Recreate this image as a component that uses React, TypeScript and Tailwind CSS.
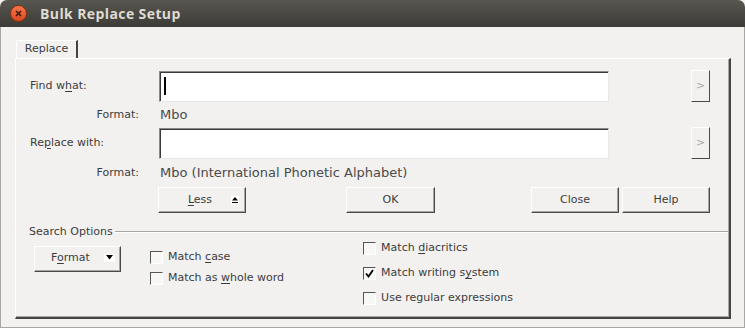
import React from "react";

const F = { fontFamily: '"DejaVu Sans", "Liberation Sans", sans-serif' };

function U({ children }: { children: React.ReactNode }) {
  return <span className="underline underline-offset-2 decoration-1">{children}</span>;
}

function Btn({ children, className = "" }: { children: React.ReactNode; className?: string }) {
  return (
    <div
      className={
        "h-[26px] flex items-center justify-center bg-[#f2f1f0] border-t border-l border-t-white border-l-white border-b border-r border-b-[#4a4a4a] border-r-[#4a4a4a] shadow-[inset_-1px_-1px_0_#a6a5a2] text-[11px] text-[#3c3c3c] " +
        className
      }
    >
      {children}
    </div>
  );
}

function Check({ checked = false, label }: { checked?: boolean; label: React.ReactNode }) {
  return (
    <div className="flex items-center gap-[5px] h-[16px] text-[11px] text-[#3c3c3c]">
      <div className="w-[13px] h-[13px] border-t border-l border-t-[#555] border-l-[#555] border-b border-r border-b-white border-r-white bg-[#f7f7f6] flex items-center justify-center">
        {checked && (
          <svg width="9" height="9" viewBox="0 0 9 9">
            <path d="M1 4.5 L3.5 7.5 L8 1" stroke="#000" strokeWidth="1.8" fill="none" />
          </svg>
        )}
      </div>
      <span>{label}</span>
    </div>
  );
}

function Input({ cursor = false }: { cursor?: boolean }) {
  return (
    <div className="w-[450px] h-[31px] bg-white border-t border-l border-t-[#8a8a8a] border-l-[#8a8a8a] border-b border-r border-b-[#e8e8e8] border-r-[#e8e8e8] shadow-[inset_1px_1px_0_#3a3a3a] flex items-center">
      {cursor && <div className="ml-[4px] w-[2px] h-[18px] bg-black" />}
    </div>
  );
}

function Arrow() {
  return (
    <div className="w-[19px] h-[32px] flex items-center justify-center bg-[#f2f1f0] border-t border-l border-t-white border-l-white border-b border-r border-b-[#4a4a4a] border-r-[#4a4a4a] text-[11px] text-[#a8a7a4]">
      &gt;
    </div>
  );
}

export default function App() {
  return (
    <div className="w-[745px] h-[328px] bg-[#f2f1f0] overflow-hidden flex flex-col" style={F}>
      {/* title bar */}
      <div className="h-[27px] shrink-0 rounded-t-[7px] bg-gradient-to-b from-[#57564f] to-[#3c3b37] flex items-center">
        <div className="ml-[10px] w-[17px] h-[17px] rounded-full bg-gradient-to-b from-[#f7774a] to-[#d9461b] border border-[#8a2f10] flex items-center justify-center">
          <svg width="7" height="7" viewBox="0 0 7 7">
            <path d="M1 1 L6 6 M6 1 L1 6" stroke="#3a1a10" strokeWidth="1.6" />
          </svg>
        </div>
        <div className="ml-[13px] text-[14px] font-bold text-[#dfdbd2] tracking-[0.4px]" style={{ fontFamily: '"Open Sans", "DejaVu Sans", sans-serif' }}>
          Bulk Replace Setup
        </div>
      </div>

      {/* body */}
      <div className="flex-1 border-l border-r border-b border-[#a8a7a3] flex flex-col">
        {/* tab */}
        <div className="mt-[13px] ml-[15px] flex">
          <div className="h-[18px] w-[62px] border-t border-l border-white border-r-2 border-r-[#444] flex items-center justify-center text-[11px] text-[#3c3c3c] rounded-tl-[2px]">
            Replace
          </div>
        </div>
        {/* panel */}
        <div className="ml-[14px] w-[716px] h-[261px] border-t border-l border-white border-r-2 border-b-2 border-r-[#454545] border-b-[#454545] shadow-[inset_-1px_-1px_0_#a8a7a3] flex flex-col text-[11px] text-[#3c3c3c]">
          <div className="mt-[11px] flex items-center">
            <div className="w-[143px] pl-[14px]">
              Find w<U>h</U>at:
            </div>
            <Input cursor />
            <div className="ml-[82px]">
              <Arrow />
            </div>
          </div>
          <div className="h-[25px] flex items-center pt-[1px]">
            <div className="w-[123px] text-right">Format:</div>
            <div className="ml-[21px] text-[13px] text-[#4a4a4a]">Mbo</div>
          </div>
          <div className="flex items-center">
            <div className="w-[143px] pl-[14px]">
              Re<U>p</U>lace with:
            </div>
            <Input />
            <div className="ml-[82px]">
              <Arrow />
            </div>
          </div>
          <div className="h-[28px] flex items-center">
            <div className="w-[123px] text-right">Format:</div>
            <div className="ml-[21px] text-[13px] text-[#4a4a4a]">Mbo (International Phonetic Alphabet)</div>
          </div>
          <div className="flex items-center">
            <Btn className="ml-[142px] w-[88px] relative">
              <span className="ml-[-4px]">
                <U>L</U>ess
              </span>
              <div className="absolute right-[6px] top-[8px] w-[8px] h-[8px] bg-white flex items-center justify-center">
                <svg width="6" height="6" viewBox="0 0 6 6">
                  <path d="M3 0 L6 3.5 L0 3.5 Z M0 5 H6 V6 H0 Z" fill="#000" />
                </svg>
              </div>
            </Btn>
            <Btn className="ml-[100px] w-[89px]">OK</Btn>
            <Btn className="ml-[96px] w-[88px]">Close</Btn>
            <Btn className="ml-[3px] w-[88px]">Help</Btn>
          </div>
          <div className="mt-[11px] flex items-center">
            <div className="ml-[13px]">Search Options</div>
            <div className="ml-[2px] flex-1 mr-[1px] h-[2px] border-t border-t-[#a8a7a3] border-b border-b-white" />
          </div>
          <div className="flex">
            <Btn className="ml-[18px] mt-[5px] w-[87px] h-[25px] relative">
              <span className="ml-[-14px]">
                F<U>o</U>rmat
              </span>
              <div className="absolute right-[5px] top-[7px] w-[11px] h-[8px] bg-white flex items-center justify-center">
                <svg width="7" height="5" viewBox="0 0 7 5">
                  <path d="M0 0 H7 L3.5 4.5 Z" fill="#000" />
                </svg>
              </div>
            </Btn>
            <div className="ml-[29px] mt-[9px] flex flex-col gap-[5px]">
              <Check label={<>Match <U>c</U>ase</>} />
              <Check label={<>Match as <U>w</U>hole word</>} />
            </div>
            <div className="ml-[79px] mt-[0px] flex flex-col gap-[9px]">
              <Check label={<>Match <U>d</U>iacritics</>} />
              <Check checked label={<>Match writing s<U>y</U>stem</>} />
              <Check label={<>Use regular expressions</>} />
            </div>
          </div>
        </div>
      </div>
    </div>
  );
}
